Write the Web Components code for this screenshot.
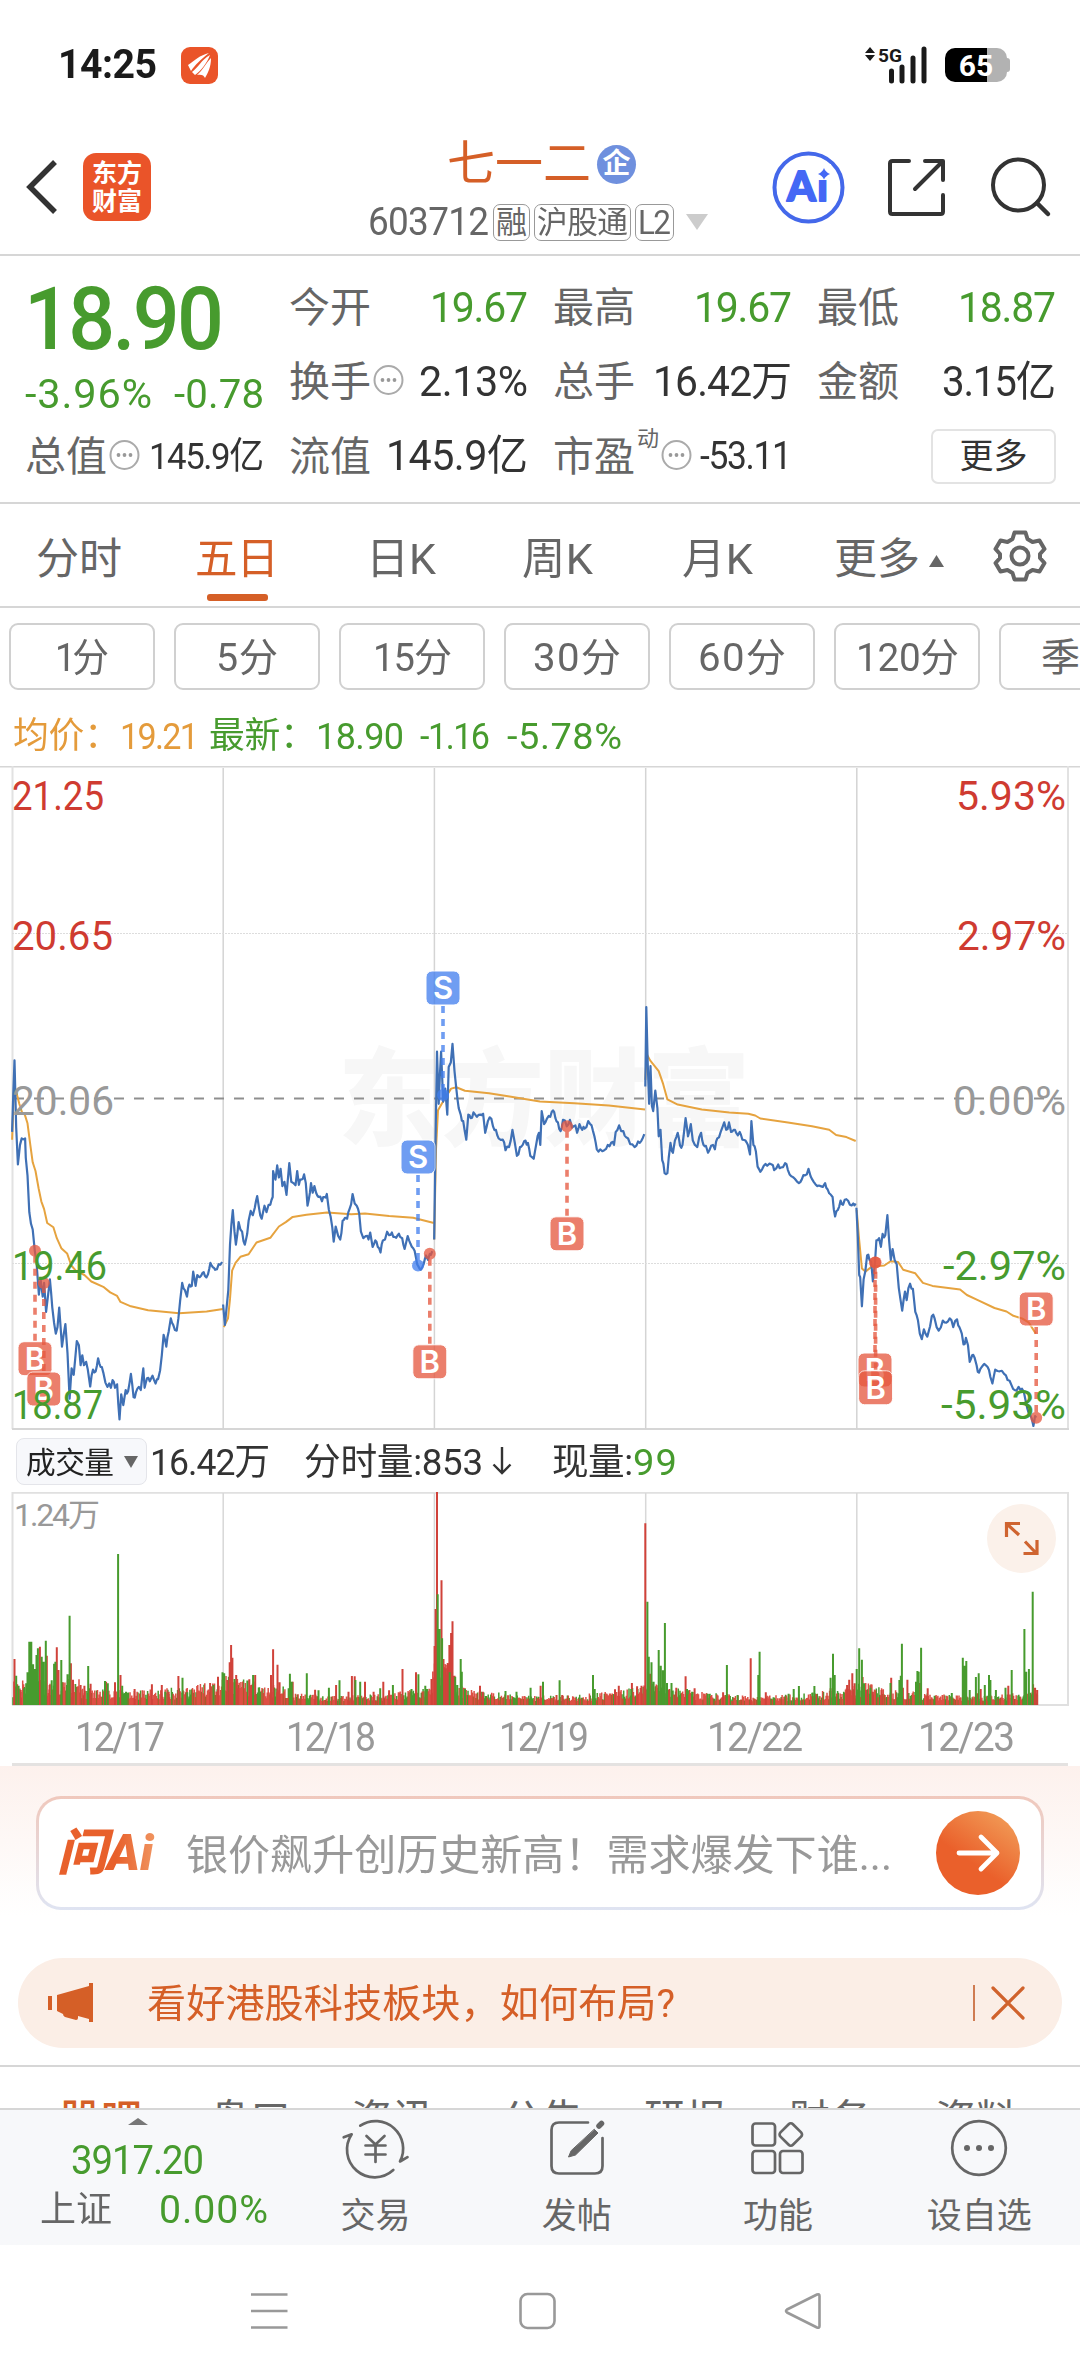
<!DOCTYPE html>
<html lang="zh-CN">
<head>
<meta charset="utf-8">
<title>七一二 603712</title>
<style>
  body {
    margin: 0;
    width: 1080px;
    height: 2376px;
    overflow: hidden;
    background: #fff;
    color: #333;
    font-family: Roboto, "Noto Sans CJK SC", sans-serif;
    line-height: 1;
    --green: #479b2e;
    --red: #cf3b31;
    --brand: #d55f27;
    --gray: #666;
    --line: #d6d6d6;
  }
</style>
</head>
<body>
<stock-page></stock-page>

<script>
const define = (name, html, setup) => {
  customElements.define(name, class extends HTMLElement {
    constructor() {
      super();
      this.attachShadow({ mode: "open" });
      this.shadowRoot.innerHTML = html;
    }

    connectedCallback() {
      if (setup) setup(this, this.shadowRoot);
    }
  });
};

// Text run that fills exactly `w` pixels: half by glyph width, half by tracking
define("fit-text", `
  <style>
    :host { display: inline-block; white-space: nowrap; line-height: 1; flex: none; }
    span { display: inline-block; transform-origin: 0 50%; }
  </style>
  <span><slot></slot></span>
`, (host, root) => {
  const w = Number(host.getAttribute("w"));
  const size = host.getAttribute("size");
  if (size) host.style.fontSize = size + "px";
  if (!w) return;
  const span = root.querySelector("span");
  const count = host.textContent.length;
  const natural = span.getBoundingClientRect().width;
  const scale = Math.sqrt(w / natural);
  span.style.transform = `scaleX(${scale})`;
  if (count > 1) span.style.letterSpacing = (w / scale - natural) / (count - 1) + "px";
  host.style.width = w + "px";
});

define("status-bar", `
  <style>
    :host { display: flex; align-items: center; height: 130px; box-sizing: border-box; padding: 0 70px 0 58px; }
    .time { color: #1a1a1a; font-weight: 700; }
    .app { margin-left: 24px; }
    .right { margin-left: auto; display: flex; align-items: center; }
    .battery {
      margin-left: 17px; width: 62px; height: 34px; border-radius: 10px;
      background: linear-gradient(90deg, #000 68%, #b2b2b2 68%);
      color: #fff; font-weight: 700; font-size: 30px; text-align: center; line-height: 36px;
    }
    .tip { width: 3px; height: 14px; background: #b2b2b2; border-radius: 0 3px 3px 0; }
  </style>
  <fit-text class="time" size="40" w="99">14:25</fit-text>
  <svg class="app" width="37" height="37" viewBox="0 0 37 37">
    <rect width="37" height="37" rx="9" fill="#ea5429"/>
    <path d="M7 18C13 14 19 8 28 6C19 13 14 18 10 24ZM11 25C17 21 20 13 29 8C26 16 20 24 14 28ZM16 28C22 23 25 16 30 11C30 20 27 26 24 31C23 28 20 27 16 28Z" fill="#fff"/>
  </svg>
  <div class="right">
    <svg width="64" height="40" viewBox="864 45 64 40" style="overflow:visible">
      <path d="M870 47l5 6h-10zM870 61l5-6h-10z" fill="#1a1a1a"/>
      <text x="878" y="61.500" font-size="19" font-weight="700" fill="#1a1a1a" textLength="24" lengthAdjust="spacingAndGlyphs">5G</text>
      <path d="M891.500 71v10M902 67v14M913 58v23M924 49v32" stroke="#1a1a1a" stroke-width="5" stroke-linecap="round"/>
    </svg>
    <span class="battery">65</span><span class="tip"></span>
  </div>
`);

define("stock-header", `
  <style>
    :host {
      display: grid; grid-template-columns: 368px 352px 1fr; height: 124px;
      border-bottom: 2px solid var(--line); box-sizing: content-box;
    }
    .left { display: flex; align-items: center; padding: 0 0 10px 26px; }
    .logo {
      display: grid; align-content: center; justify-items: center; row-gap: 3px;
      margin-left: 23px; width: 68px; height: 68px; border-radius: 13px;
      background: #ea5429; color: #fff; font-weight: 700; font-size: 25px;
    }
    .mid { display: flex; flex-direction: column; }
    .title { display: flex; align-items: center; margin: 10px 0 0 79px; color: var(--brand); }
    .qi {
      width: 39px; height: 39px; margin-left: 6px; border-radius: 50%; background: #6f90de;
      color: #fff; font-size: 28px; font-weight: 700; text-align: center; line-height: 38px;
    }
    .code { display: flex; align-items: center; color: var(--gray); margin-top: 15px; }
    .tag {
      height: 35px; border: 1.500px solid #999; border-radius: 7px; margin-left: 4px; padding: 0 2px;
      display: flex; align-items: center;
    }
    .right { padding-left: 50px; }
    svg { display: block; }
    text { font-family: "Lato", sans-serif; font-weight: 900; }
  </style>
  <div class="left">
    <svg width="34" height="58" viewBox="0 0 34 58"><path d="M29 4L4 29l25 25" fill="none" stroke="#333" stroke-width="5.500"/></svg>
    <div class="logo"><span>东方</span><span>财富</span></div>
  </div>
  <div class="mid">
    <div class="title"><fit-text size="48" w="144">七一二</fit-text><span class="qi">企</span></div>
    <div class="code">
      <fit-text size="38" w="121">603712</fit-text>
      <span class="tag"><fit-text size="31" w="31">融</fit-text></span>
      <span class="tag"><fit-text size="31" w="91">沪股通</fit-text></span>
      <span class="tag"><fit-text size="33" w="33">L2</fit-text></span>
      <svg width="22" height="16" style="margin-left:12px"><path d="M0 0h22l-11 16z" fill="#ccc"/></svg>
    </div>
  </div>
  <svg class="right" width="290" height="110" viewBox="770 130 290 110" fill="none" stroke-linecap="round" stroke-linejoin="round">
    <circle cx="808.500" cy="187.500" r="34" stroke="#4468ea" stroke-width="4"/>
    <text x="787" y="201" font-size="41" fill="#4468f5" stroke="#4468f5" stroke-width="1.800" textLength="41">Ai</text>
    <path d="M817 164h14v16h-14z" fill="#fff"/>
    <path d="M824 168q1.500 4 6 6q-4.500 2-6 5.500q-1.500-4-6-5.500q4.500-2 6-6z" fill="#4468f5"/>
    <path d="M909 161h-16.500q-2.500 0-2.500 2.500v48q0 2.500 2.500 2.500h48q2.500 0 2.500-2.500V195M925 161h18v19M942 162l-27 27" stroke="#333" stroke-width="4"/>
    <circle cx="1018.500" cy="185" r="25.500" stroke="#333" stroke-width="4"/>
    <path d="M1037 203l11 11" stroke="#333" stroke-width="4.500"/>
  </svg>
`);

define("info-dot", `
  <style>:host { display: block; width: 31px; height: 31px; }</style>
  <svg width="31" height="31" viewBox="0 0 31 31" style="overflow:visible">
    <circle cx="15.500" cy="13" r="14" fill="none" stroke="#aaa" stroke-width="2"/>
    <g fill="#999"><circle cx="9.500" cy="13" r="1.900"/><circle cx="15.500" cy="13" r="1.900"/><circle cx="21.500" cy="13" r="1.900"/></g>
  </svg>
`);

define("quote-cell", `
  <style>
    :host { display: flex; align-items: center; justify-content: space-between; color: #333; }
    .label { display: flex; align-items: center; color: var(--gray); gap: 2px; padding-top: 2px; }
    :host([down]) { color: var(--green); }
  </style>
  <span class="label"><slot name="label"></slot></span><slot></slot>
`);

define("quote-panel", `
  <style>
    :host {
      display: grid; grid-template-columns: 239px repeat(3, 239px); grid-template-rows: repeat(3, 74.500px);
      column-gap: 25px; height: 248px; box-sizing: border-box; padding: 14px 0 0 25px;
      border-bottom: 2px solid var(--line);
    }
    .price { grid-row: span 2; color: var(--green); padding-top: 6px; }
    .price .last { font-weight: 500; margin-left: -1px; }
    .diff { display: flex; justify-content: space-between; margin-top: 12px; }
    sup { align-self: flex-start; font-size: 22px; line-height: 22px; margin-top: -9px; vertical-align: baseline; }
    .more {
      justify-self: end; align-self: center; width: 125px; height: 55px; box-sizing: border-box;
      border: 2px solid #e3e3e3; border-radius: 7px; display: grid; place-items: center;
    }
  </style>
  <div class="price">
    <fit-text class="last" size="87" w="200">18.90</fit-text>
    <div class="diff"><fit-text size="40" w="127">-3.96%</fit-text><fit-text size="40" w="90">-0.78</fit-text></div>
  </div>
  <quote-cell down><fit-text slot="label" size="41">今开</fit-text><fit-text size="43" w="98">19.67</fit-text></quote-cell>
  <quote-cell down><fit-text slot="label" size="41">最高</fit-text><fit-text size="43" w="98">19.67</fit-text></quote-cell>
  <quote-cell down><fit-text slot="label" size="41">最低</fit-text><fit-text size="43" w="98">18.87</fit-text></quote-cell>
  <quote-cell><fit-text slot="label" size="41">换手</fit-text><info-dot slot="label"></info-dot><fit-text size="42" w="109">2.13%</fit-text></quote-cell>
  <quote-cell><fit-text slot="label" size="41">总手</fit-text><fit-text size="42" w="139">16.42万</fit-text></quote-cell>
  <quote-cell><fit-text slot="label" size="41">金额</fit-text><fit-text size="42" w="114">3.15亿</fit-text></quote-cell>
  <quote-cell><fit-text slot="label" size="41">总值</fit-text><info-dot slot="label"></info-dot><fit-text size="37" w="115">145.9亿</fit-text></quote-cell>
  <quote-cell><fit-text slot="label" size="41">流值</fit-text><fit-text size="42" w="142">145.9亿</fit-text></quote-cell>
  <quote-cell><fit-text slot="label" size="41">市盈</fit-text><sup slot="label">动</sup><info-dot slot="label"></info-dot><fit-text size="38" w="92">-53.11</fit-text></quote-cell>
  <span class="more"><fit-text size="34">更多</fit-text></span>
`);

define("period-tabs", `
  <style>
    :host {
      display: grid; grid-template-columns: 158px 158px 169px 145px 175px 1fr; height: 102px;
      border-bottom: 2px solid var(--line); color: var(--gray); font-size: 43px;
    }
    .tab { display: flex; flex-direction: column; align-items: center; padding-top: 34px; }
    .on { color: var(--brand); }
    .on i { width: 61px; height: 7px; border-radius: 3px; background: var(--brand); margin-top: 13px; }
    .end { display: flex; padding: 25px 0 0 29px; align-items: flex-start; }
    .end fit-text { margin-top: 9px; }
  </style>
  <span class="tab">分时</span>
  <span class="tab on"><fit-text w="84">五日</fit-text><i></i></span>
  <span class="tab"><fit-text w="70">日K</fit-text></span>
  <span class="tab"><fit-text w="71">周K</fit-text></span>
  <span class="tab"><fit-text w="71">月K</fit-text></span>
  <div class="end">
    <fit-text w="86">更多</fit-text>
    <svg width="15" height="12" style="margin:26px 0 0 9px"><path d="M7.500 0L15 12H0z" fill="#666"/></svg>
    <svg width="54" height="54" viewBox="-27 -27 54 54" style="margin-left:49px" fill="none" stroke="#666" stroke-width="4" stroke-linejoin="round">
      <path d="M-5.500-23.500h11l2 6.500l5 3l7-1.500l5 8.500l-4.500 5v4l4.500 5l-5 8.500l-7-1.500l-5 3l-2 6.500h-11l-2-6.500l-5-3l-7 1.500l-5-8.500l4.500-5v-4l-4.500-5l5-8.500l7 1.500l5-3z"/>
      <circle r="8.500"/>
    </svg>
  </div>
`);

define("minute-chips", `
  <style>
    :host { display: flex; gap: 18.800px; height: 98px; padding: 15px 0 0 9px; box-sizing: border-box; overflow: hidden; color: var(--gray); }
    span {
      flex: none; width: 146.200px; height: 67px; box-sizing: border-box; border: 2px solid #d0d0d0; border-radius: 9px;
      display: grid; place-items: center; font-size: 39px; padding-top: 3px;
    }
    span:last-child { place-items: center start; padding-left: 40px; }
  </style>
  <span><fit-text w="54">1分</fit-text></span>
  <span><fit-text w="62">5分</fit-text></span>
  <span><fit-text w="79">15分</fit-text></span>
  <span><fit-text w="88">30分</fit-text></span>
  <span><fit-text w="88">60分</fit-text></span>
  <span><fit-text w="103">120分</fit-text></span>
  <span>季K</span>
`);

define("price-legend", `
  <style>
    :host { display: flex; align-items: center; height: 60px; padding-left: 13px; color: var(--green); font-size: 37px; }
    .avg { color: #e49b3b; }
  </style>
  <fit-text class="avg" w="107" size="36">均价：</fit-text><fit-text class="avg" w="79">19.21</fit-text>
  <fit-text w="107" size="36" style="margin-left:10px">最新：</fit-text><fit-text w="88">18.90</fit-text>
  <fit-text w="70" style="margin-left:16px">-1.16</fit-text><fit-text w="115" style="margin-left:17px">-5.78%</fit-text>
`);

// Traced at 2.904 units per px across and 2.306 units per px down
const PRICE = [
  "35,860 42,695 47,850 52,935 58,890 63,875 73,875 75,920 80,960 85,1045 95,1085 101,1134 106,1160 113,1235 118,1200 124,1240 128,1208 134,1275 139,1240 145,1200 152,1265 162,1325 167,1310 172,1265 180,1355 190,1303 196,1370 202,1475 208,1405 214,1420 223,1342 229,1352 234,1398 239,1375 244,1398 250,1390 255,1408 262,1447 270,1408 278,1412 285,1382 292,1402 300,1415 306,1438 312,1448 317,1440 322,1450 327,1432 334,1450 340,1442 347,1523 352,1465 358,1490 365,1455 372,1458 380,1418 388,1472 395,1460 403,1448 409,1455 416,1405 420,1450 427,1428 435,1435 443,1422 452,1440 459,1430 465,1410 470,1375 475,1328 483,1355 490,1320 496,1290 503,1305 513,1318 518,1290 523,1250 529,1208 537,1225 543,1240 550,1212 557,1215 561,1182 568,1215 573,1190 580,1195 588,1185 595,1192 604,1188 611,1162 618,1172 625,1178 635,1165 645,1160",
  "648,1258 653,1305 658,1265 663,1225 668,1120 676,1040 681,1090 685,1120 693,1068 698,1085 703,1090 711,1120 718,1095 722,1065 728,1042 734,1052 740,1035 747,1008 752,1035 760,1060 768,1030 774,1045 780,1028 785,1028 792,1010 793,950 800,970 805,937 810,965 815,945 820,985 826,975 832,1005 840,932 846,975 852,978 858,983 863,950 868,982 875,970 883,958 888,978 893,1030 900,1000 903,978 908,1000 913,985 918,1000 925,1010 935,1020 942,1010 949,1003 955,1040 960,1055 965,1080 969,1113 975,1078 982,1100 988,1108 995,1065 1002,1058 1008,1060 1015,1038 1024,1003 1030,1025 1036,1030 1043,1048 1048,1090 1055,1105 1063,1100 1070,1108 1075,1092 1082,1125 1090,1110 1097,1125 1105,1138 1112,1110 1118,1108 1124,1090 1130,1098 1138,1092 1146,1102 1155,1098 1162,1102 1168,1105 1175,1130 1184,1100 1192,1118 1200,1128 1208,1150 1215,1170 1222,1178 1230,1165 1237,1145 1243,1155 1248,1141 1255,1135",
  "1261,1108 1265,870 1269,675 1274,795 1281,675 1287,790 1293,760 1299,820 1303,710 1309,700 1314,657 1320,720 1325,760 1332,805 1338,820 1345,835 1354,878 1360,820 1367,828 1375,815 1385,825 1395,820 1403,818 1409,862 1417,835 1427,830 1432,848 1440,855 1448,875 1460,878 1468,902 1478,895 1488,855 1495,885 1501,915 1510,895 1518,890 1526,880 1533,885 1540,915 1550,922 1558,885 1565,862 1569,890 1573,812 1580,842 1588,830 1598,825 1606,810 1613,828 1620,838 1628,858 1635,832 1646,847 1655,832 1661,850 1671,845 1676,862 1683,842 1691,855 1698,852 1708,835 1718,845 1726,870 1733,900 1743,900 1755,902 1765,890 1775,885 1783,890 1788,860 1798,845 1804,858 1810,858 1818,872 1830,888 1843,895 1853,882 1863,880 1871,865",
  "1874,755 1877,572 1881,700 1885,795 1889,708 1893,800 1897,812 1903,765 1909,805 1913,870 1918,855 1923,925 1930,955 1938,955 1942,920 1947,885 1954,908 1960,880 1968,862 1975,892 1982,890 1991,828 1998,870 2006,842 2012,880 2018,890 2025,895 2036,862 2043,890 2050,892 2056,908 2065,892 2076,900 2083,875 2093,860 2103,838 2109,855 2117,838 2123,860 2131,855 2138,862 2148,860 2156,878 2165,880 2172,890 2178,912 2182,835 2188,890 2195,905 2200,940 2208,952 2218,938 2228,938 2241,935 2248,948 2260,935 2268,942 2280,932 2288,948 2298,962 2308,968 2320,978 2328,970 2338,960 2348,945 2354,962 2363,975 2373,985 2383,985 2396,978 2403,992 2413,1005 2418,1010 2425,1055 2433,1040 2441,1018 2448,1028 2458,1015 2468,1028 2478,1025 2485,1025",
  "2487,1035 2491,1100 2495,1190 2498,1195 2503,1262 2508,1200 2513,1180 2518,1145 2525,1155 2530,1160 2535,1205 2541,1161 2545,1110 2553,1105 2558,1125 2563,1095 2571,1098 2577,1052 2582,1110 2587,1155 2592,1130 2598,1155 2604,1165 2610,1220 2620,1272 2628,1228 2633,1248 2638,1220 2643,1210 2651,1222 2658,1275 2666,1295 2671,1325 2677,1338 2683,1315 2693,1332 2701,1308 2706,1285 2714,1290 2720,1310 2726,1318 2738,1295 2748,1300 2758,1290 2768,1310 2779,1292 2786,1310 2793,1325 2798,1350 2805,1335 2811,1352 2816,1390 2823,1375 2830,1380 2836,1398 2843,1415 2851,1402 2858,1395 2868,1402 2876,1425 2882,1440 2890,1408 2903,1412 2916,1418 2926,1432 2938,1445 2946,1455 2958,1448 2968,1452 2978,1478 2988,1510 2996,1520 3001,1538 3006,1515 3009,1519",
];
const AVERAGE = [
  "35,878 40,770 48,770 56,795 64,815 72,820 80,840 88,890 95,930 103,950 112,990 120,1020 128,1038 137,1070 155,1080 165,1105 178,1128 195,1140 207,1168 220,1180 245,1190 265,1205 300,1217 320,1230 340,1238 350,1252 380,1262 430,1271 520,1278 600,1274 648,1268",
  "650,1310 662,1290 668,1245 674,1180 684,1162 698,1148 722,1142 745,1115 785,1104 810,1078 830,1068 850,1056 890,1051 950,1046 1020,1050 1060,1048 1130,1054 1200,1058 1260,1070",
  "1261,1108 1266,900 1272,810 1290,785 1310,760 1325,757 1350,765 1420,771 1480,778 1568,790 1668,794 1768,799 1873,808",
  "1874,740 1878,680 1888,695 1913,720 1926,750 1938,785 1968,797 2038,808 2118,815 2173,818 2193,822 2208,829 2288,838 2358,847 2408,855 2428,867 2458,872 2485,881",
  "2488,1040 2494,1100 2503,1175 2513,1182 2533,1170 2568,1168 2586,1158 2608,1160 2623,1178 2658,1186 2680,1208 2708,1215 2788,1223 2808,1236 2838,1247 2888,1266 2923,1274 2943,1284 2968,1290 2988,1300 3008,1325",
];

const toPoints = (text) => text.split(" ").map((pair) => {
  const [x, y] = pair.split(",").map(Number);
  return [x / 2.904, 760 + y / 2.306];
});
const toPath = (points) => "M" + points.map(([x, y]) => x.toFixed(1) + " " + y.toFixed(1)).join("L");

const random = (seed) => () => {
  seed = (seed * 16807) % 2147483647;
  return seed / 2147483647;
};

// Minute-to-minute ticks between the main turns of the line
const roughen = (points) => {
  const rand = random(712);
  const out = [];
  points.forEach(([x, y], i) => {
    out.push([x, y]);
    const next = points[i + 1];
    if (next && next[0] - x > 2.2) {
      out.push([(x + next[0]) / 2, (y + next[1]) / 2 + (rand() - 0.5) * 6]);
    }
  });
  return out;
};

const MARKS = [
  ["B", 35, 1251.8, 1359.7], ["B", 43.8, 1284, 1390],
  ["S", 418, 1266.5, 1158], ["B", 429.8, 1254.8, 1362.8],
  ["S", 443, 1096, 989], ["B", 567, 1127.3, 1234.8],
  ["B", 875, 1263.5, 1371], ["B", 875.6, 1263.5, 1388.8],
  ["B", 1036.2, 1418.7, 1310],
];

const mark = ([kind, x, dotY, boxY]) => {
  const buy = kind === "B";
  const fill = buy ? "#e6583f" : "#427fee";
  const edge = boxY > dotY ? boxY - 18 : boxY + 18;
  return `
    <g opacity=".76">
      <path d="M${x} ${edge}V${dotY}" stroke="${fill}" stroke-width="3.600" stroke-dasharray="7 6"/>
      <circle cx="${x}" cy="${dotY}" r="6" fill="${fill}"/>
      <rect x="${x - 17}" y="${boxY - 17}" width="34" height="34" rx="6" fill="${fill}" stroke="#fff"/>
    </g>
    <text class="mark" x="${x}" y="${boxY + 11}">${kind}</text>`;
};

define("price-chart", `
  <style>
    :host { display: block; height: 664px; }
    svg { display: block; }
    text { font-size: 40px; }
    .mark { font-family: Inter, sans-serif; font-size: 31px; font-weight: 600; fill: #fff; text-anchor: middle; }
    .water { font-size: 106px; font-weight: 900; fill: #f7f7f7; }
    .up { fill: var(--red); }
    .flat { fill: #999; }
    .down { fill: var(--green); }
  </style>
  <svg width="1080" height="664" viewBox="0 767 1080 664"></svg>
`, (host, root) => {
  const rows = [
    [811, "21.25", 90, "5.93%", 110, "up"],
    [951, "20.65", 99, "2.97%", 109, "up"],
    [1116, "20.06", 100, "0.00%", 113, "flat"],
    [1281, "19.46", 93, "-2.97%", 123, "down"],
    [1420, "18.87", 89, "-5.93%", 125, "down"],
  ];
  root.querySelector("svg").innerHTML = `
    <text class="water" x="338" y="1138" textLength="412" lengthAdjust="spacingAndGlyphs">东方财富</text>
    <g fill="none">
      <path d="M0 767.500H1080" stroke="#d6d6d6" stroke-width="2"/>
      <path d="M12.500 767V1430M1068 767V1430" stroke="#e2e2e2" stroke-width="2"/>
      <path d="M12 1430H1069" stroke="#d6d6d6" stroke-width="2"/>
      <path d="M223.200 769V1430M434.400 769V1430M645.700 769V1430M856.800 769V1430" stroke="#d4d4d4" stroke-width="1.500"/>
      <path d="M12 934.500H1068M12 1264.500H1068" stroke="#ddd" stroke-width="1" stroke-dasharray="2 1"/>
      <path d="M14 1099.500H1062" stroke="#8f8f8f" stroke-width="2" stroke-dasharray="10 10"/>
      <g stroke="#e6a33f" stroke-width="2" stroke-linejoin="round">
        ${AVERAGE.map((day) => `<path d="${toPath(toPoints(day))}"/>`).join("")}
      </g>
      <g stroke="#3f70b5" stroke-width="2.200" stroke-linejoin="round">
        ${PRICE.map((day) => `<path d="${toPath(roughen(toPoints(day)))}"/>`).join("")}
      </g>
    </g>
    ${MARKS.map(mark).join("")}
    ${rows.map(([y, left, lw, right, rw, cls]) => `
      <text class="${cls}" x="12" y="${y}" textLength="${lw + 2}" lengthAdjust="spacingAndGlyphs">${left}</text>
      <text class="${cls}" x="${1066 - rw}" y="${y}" textLength="${rw}" lengthAdjust="spacingAndGlyphs">${right}</text>`).join("")}
  `;
});

define("volume-legend", `
  <style>
    :host { display: flex; align-items: center; height: 62px; padding-left: 16px; font-size: 37px; }
    .pick {
      display: flex; align-items: center; width: 131px; height: 47px; box-sizing: border-box; padding: 2px 0 0 9px;
      background: #f7f8fb; border: 1px solid #e4e5ea; border-radius: 8px; color: #222;
    }
    fit-text { margin-top: 2px; }
    .green { color: var(--green); }
  </style>
  <span class="pick">
    <fit-text size="30" w="88">成交量</fit-text>
    <svg width="14" height="12" style="margin-left:10px"><path d="M0 0h14l-7 12z" fill="#666"/></svg>
  </span>
  <fit-text w="120" style="margin-left:3px">16.42万</fit-text>
  <fit-text w="179" style="margin-left:34px">分时量:853</fit-text>
  <svg width="20" height="30" viewBox="0 0 20 30" style="margin-left:9px"><path d="M10 1v26M1.500 18.500L10 27l8.500-8.500" fill="none" stroke="#333" stroke-width="2.400"/></svg>
  <fit-text w="81" style="margin-left:40px">现量:</fit-text><fit-text class="green" w="44">99</fit-text>
`);

// [x, height] spikes in the same units as the price traces
const SPIKES_UP = "42,138 50,62 60,45 116,175 136,148 144,60 165,173 170,105 206,125 212,76 234,60 245,58 263,64 308,70 334,68 350,90 391,48 441,62 470,60 490,40 518,87 540,38 610,66 633,85 660,75 667,128 671,180 675,142 686,90 692,50 724,77 730,60 741,90 787,90 793,167 806,121 812,68 850,70 915,46 976,60 1012,40 1022,87 1030,86 1060,70 1085,40 1113,70 1130,44 1169,108 1208,98 1253,78 1262,177 1265,288 1269,640 1275,160 1282,374 1288,138 1294,110 1300,125 1305,180 1310,216 1314,251 1320,88 1350,50 1394,58 1402,40 1570,58 1616,30 1633,30 1786,47 1797,58 1835,66 1850,56 1863,58 1874,545 1888,94 1925,55 1944,48 1964,52 1991,86 2017,50 2100,38 2180,140 2224,38 2370,33 2412,50 2460,60 2466,76 2475,95 2482,65 2505,84 2515,45 2535,40 2560,45 2588,82 2622,52 2635,76 2671,66 2694,50 2838,35 2848,48 2875,38 2928,58 2940,35 3000,62 3006,52 3012,45";
const SPIKES_DOWN = "47,88 54,58 70,50 76,65 80,98 85,190 91,190 96,122 102,108 106,150 110,170 121,145 127,130 133,193 150,74 157,124 161,130 178,135 196,92 202,268 256,117 305,72 313,65 343,453 355,58 366,40 480,40 530,82 544,38 620,60 646,98 651,95 681,78 735,90 756,40 842,94 847,70 891,95 925,44 955,52 986,74 1032,75 1046,70 1104,50 1141,60 1195,48 1215,92 1235,58 1271,332 1277,228 1284,200 1306,98 1322,85 1328,60 1338,138 1341,100 1350,48 1468,42 1500,40 1541,52 1577,70 1625,74 1722,90 1727,48 1833,48 1880,310 1884,145 1892,128 1898,70 1913,165 1919,118 1925,104 1931,246 1937,66 1950,66 1995,48 2010,40 2055,34 2111,120 2142,30 2202,90 2206,160 2290,34 2305,48 2320,57 2365,57 2412,82 2419,154 2424,90 2488,108 2495,170 2503,136 2509,65 2528,52 2586,66 2612,75 2616,88 2619,184 2660,70 2664,102 2668,100 2675,172 2764,36 2796,142 2801,118 2806,132 2816,45 2834,84 2842,95 2860,60 2872,90 2876,75 2892,45 2920,52 2938,105 2975,228 2980,100 2988,108 2999,340";

define("volume-chart", `
  <style>
    :host { display: block; height: 214px; }
    svg { display: block; }
    text { font-size: 32px; fill: #999; }
  </style>
  <svg width="1080" height="214" viewBox="0 1493 1080 214"></svg>
`, (host, root) => {
  const rand = random(1224);
  const envelope = (x) => {
    const day = ((x - 12) % 211.2) / 211.2;
    if (x < 80) return 22;
    if (x > 432 && x < 455) return 38;
    return 7 + 13 * Math.pow(Math.abs(day - 0.55) * 1.9, 2) + (x < 290 ? 5 : 0);
  };
  const bar = (x, h) => `M${x.toFixed(1)} 1706v-${h.toFixed(1)}`;
  let up = "";
  let down = "";
  for (let x = 13; x < 1038; x += 0.88) {
    const h = 2 + envelope(x) * (0.25 + rand() * 0.85);
    const green = x > 24 && x < 46 ? rand() < 0.85 : rand() < 0.35;
    if (green) down += bar(x, h);
    else up += bar(x, h);
  }
  const spikes = (text) => text.split(" ").map((pair) => {
    const [x, h] = pair.split(",").map(Number);
    return bar(x / 2.904, h / 3);
  }).join("");
  root.querySelector("svg").innerHTML = `
    <g fill="none">
      <path d="M12 1493.800H1069M12.500 1493V1706M1068 1493V1706M12 1706H1069" stroke="#e0e0e0" stroke-width="2"/>
      <path d="M223.200 1494V1706M434.400 1494V1706M645.700 1494V1706M856.800 1494V1706" stroke="#d8d8d8" stroke-width="1.500"/>
      <path d="${down}" stroke="#479b2e" stroke-width="1.500"/>
      <path d="${up}" stroke="#d93c30" stroke-width="1.500" stroke-opacity=".9"/>
      <path d="${spikes(SPIKES_UP)}" stroke="#d0423a" stroke-width="2"/>
      <path d="${spikes(SPIKES_DOWN)}" stroke="#479b2e" stroke-width="2"/>
      <circle cx="1021.500" cy="1539.500" r="34.500" fill="#fbf1ea"/>
      <path d="M1006.500 1538v-13.500h13.500M1007 1525l12 11M1037 1541v13.500h-13.500M1036 1554l-11-11.500" stroke="#cf6430" stroke-width="3.200"/>
    </g>
    <text x="14" y="1527" textLength="86">1.24万</text>
  `;
});

define("date-axis", `
  <style>
    :host {
      display: grid; grid-template-columns: repeat(5, 1fr); height: 57px; margin: 0 12px;
      border-bottom: 3px solid #e4e2e1; color: #999; font-size: 41px;
    }
    span { display: grid; place-items: start center; padding: 11px 0 0 5px; }
    span:nth-child(n+4) { padding-left: 8px; }
  </style>
  <span><fit-text w="90">12/17</fit-text></span>
  <span><fit-text w="90">12/18</fit-text></span>
  <span><fit-text w="90">12/19</fit-text></span>
  <span><fit-text w="96">12/22</fit-text></span>
  <span><fit-text w="97">12/23</fit-text></span>
`);

define("ask-ai", `
  <style>
    :host { display: block; height: 162px; padding: 30px 36px 0; background: linear-gradient(#fdf1ed, #fff 150px); }
    .box {
      display: flex; align-items: center; height: 114px; box-sizing: border-box; border: 3px solid transparent; border-radius: 25px;
      padding: 0 21px 0 20px;
      background: linear-gradient(#fff, #fff) padding-box, linear-gradient(#f0c8bc, #dfe4f2) border-box;
    }
    .logo {
      font: italic 900 50px/52px Roboto, "Noto Sans CJK SC", sans-serif; height: 52px;
      width: 107px; margin-left: -2px; white-space: nowrap;
      background: linear-gradient(90deg, #e8602b 55%, #f2a06c); -webkit-background-clip: text; background-clip: text; color: transparent;
    }
    .q { color: #999; margin: 5px 0 0 22px; }
    .go {
      margin-left: auto; width: 84px; height: 84px; border-radius: 50%;
      background: linear-gradient(215deg, #f2a05a 5%, #ea602b 60%);
    }
  </style>
  <div class="box">
    <span class="logo">问Ai</span>
    <fit-text class="q" size="42" w="706">银价飙升创历史新高！需求爆发下谁...</fit-text>
    <svg class="go" viewBox="0 0 84 84"><path d="M23 42h38M45 26l16 16l-16 16" fill="none" stroke="#fff" stroke-width="4.800" stroke-linecap="round" stroke-linejoin="round"/></svg>
  </div>
`);

define("notice-bar", `
  <style>
    :host {
      display: flex; align-items: center; height: 90px; margin: 0 18px 17px; border-radius: 45px; padding: 0 37px 0 30px;
      background: #fbeee6; color: var(--brand);
    }
    fit-text { margin: 2px 0 0 53px; }
    i { width: 2px; height: 36px; background: #cf7c52; margin: 0 16px 0 auto; }
  </style>
  <svg width="46" height="40" viewBox="0 0 46 40"><path d="M0 13h4v14H0zM9 12L41 3V0h4v39h-4v-3l-11-3v2q0 2-2 2l-11-3q-2-1-2-3l-6-3z" fill="#d55f27"/></svg>
  <fit-text size="39" w="528">看好港股科技板块，如何布局?</fit-text>
  <i></i>
  <svg width="34" height="34" viewBox="0 0 34 34"><path d="M2 2l30 30M32 2L2 32" stroke="#d0622c" stroke-width="3.200" stroke-linecap="round"/></svg>
`);

define("section-tabs", `
  <style>
    :host {
      display: grid; grid-template-columns: 176px 122px 162px 138px 148px 142px 150px; height: 41px; overflow: hidden;
      border-top: 2px solid var(--line); color: var(--gray); font-size: 41px; padding-left: 13px;
    }
    span { text-align: center; padding-top: 33px; }
    .on { color: var(--brand); font-weight: 500; }
  </style>
  <span class="on">股吧</span><span>盘口</span><span>资讯</span><span>公告</span><span>研报</span><span>财务</span><span>资料</span>
`);

define("dock-item", `
  <style>
    :host { display: flex; flex-direction: column; align-items: center; color: var(--gray); font-size: 35px; padding-top: 7px; }
    .name { margin-top: 20px; }
  </style>
  <slot></slot><span class="name"><slot name="name"></slot></span>
`);

define("dock-bar", `
  <style>
    :host {
      display: grid; grid-template-columns: 275px repeat(4, 201.200px); height: 135px;
      border-top: 2px solid var(--line); background: #f7f8fa;
    }
    .index { display: flex; flex-direction: column; align-items: center; color: var(--green); padding-top: 8px; }
    .row { display: flex; align-items: center; justify-content: space-between; width: 228px; margin: 10px 0 0 33px; }
    svg { fill: none; stroke: #666; stroke-width: 2.700; stroke-linecap: round; stroke-linejoin: round; overflow: visible; }
  </style>
  <div class="index">
    <svg width="20" height="7"><path d="M10 0l10 7H0z" fill="#777" stroke="none"/></svg>
    <fit-text size="40" w="133" style="margin-top:16px">3917.20</fit-text>
    <div class="row"><fit-text size="36" w="72" style="color:#666">上证</fit-text><fit-text size="38" w="109">0.00%</fit-text></div>
  </div>
  <dock-item>
    <svg width="66" height="62" viewBox="343 2117 66 62">
      <path d="M360.300 2125.700A27.600 27.600 0 0 1 400 2161.500l7.500-4.300M393.300 2170A27.600 27.600 0 0 1 351.700 2134.300l-8 3"/>
      <path d="M366.500 2136l9 8.500l9-8.500M375.500 2145v17M365.500 2145.500h20M365.500 2154.500h20"/>
    </svg><span slot="name">交易</span>
  </dock-item>
  <dock-item>
    <svg width="66" height="62" viewBox="544 2117 66 62">
      <path d="M588 2122.500h-29q-7.500 0-7.500 7.500v36q0 7.500 7.500 7.500h36q7.500 0 7.500-7.500v-28"/>
      <path d="M594.500 2129.500l3.500 3.500l-22.500 22l-7 2l2.500-6z" fill="#666" stroke-width="1"/>
      <path d="M599 2126l2.500-2.500" stroke-width="5.500"/>
    </svg><span slot="name">发帖</span>
  </dock-item>
  <dock-item>
    <svg width="66" height="62" viewBox="746 2117 66 62">
      <rect x="753.500" y="2123.500" width="22.500" height="22" rx="3"/><rect x="753.500" y="2151" width="22.500" height="22" rx="3"/>
      <rect x="781" y="2151" width="22.500" height="22" rx="3"/><rect x="-8.800" y="-8.800" width="17.600" height="17.600" rx="3" transform="translate(791.800 2134.500) rotate(45)"/>
    </svg><span slot="name">功能</span>
  </dock-item>
  <dock-item>
    <svg width="66" height="62" viewBox="-33 -31 66 62"><circle r="26.800"/><g fill="#666" stroke="none"><circle cx="-12" r="3"/><circle r="3"/><circle cx="12" r="3"/></g></svg>
    <span slot="name">设自选</span>
  </dock-item>
`);

define("nav-bar", `
  <style>
    :host { display: block; height: 132px; }
    svg { display: block; }
  </style>
  <svg width="1080" height="132" viewBox="0 2244 1080 132" fill="none" stroke="#999" stroke-width="2.600" stroke-linejoin="round">
    <path d="M251 2293.500h36.500M251 2310h36.500M251 2326.500h36.500"/>
    <rect x="520.500" y="2293" width="34" height="34" rx="7"/>
    <path d="M817 2293.500q2.500-1 2.500 1.500v30q0 2.500-2.500 1.500l-30-15q-2-1.500 0-3z"/>
  </svg>
`);

define("stock-page", `
  <style>:host { display: flow-root; width: 1080px; }</style>
  <status-bar></status-bar>
  <stock-header></stock-header>
  <quote-panel></quote-panel>
  <period-tabs></period-tabs>
  <minute-chips></minute-chips>
  <price-legend></price-legend>
  <price-chart></price-chart>
  <volume-legend></volume-legend>
  <volume-chart></volume-chart>
  <date-axis></date-axis>
  <ask-ai></ask-ai>
  <notice-bar></notice-bar>
  <section-tabs></section-tabs>
  <dock-bar></dock-bar>
  <nav-bar></nav-bar>
`);
</script>
</body>
</html>
